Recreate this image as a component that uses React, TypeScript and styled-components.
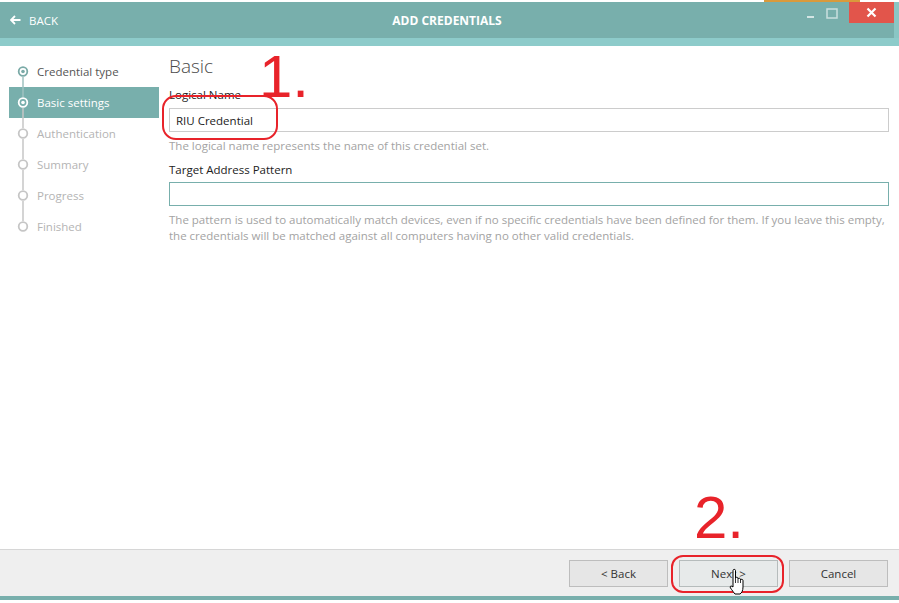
import React from "react";
import styled, { createGlobalStyle } from "styled-components";

const GlobalStyle = createGlobalStyle`
  html, body {
    margin: 0;
    padding: 0;
    background: #ffffff;
  }
  body {
    font-family: "Open Sans", "Noto Sans", sans-serif;
  }
`;

const Window = styled.div`
  position: relative;
  width: 899px;
  height: 603px;
  display: flex;
  flex-direction: column;
  overflow: hidden;
  background: #ffffff;
`;

const TopStrip = styled.div`
  height: 2px;
  background: linear-gradient(
    to right,
    #ffffff 0,
    #ffffff 764px,
    #d99a3c 764px,
    #d99a3c 860px,
    #ffffff 860px
  );
`;

const TitleBar = styled.div`
  position: relative;
  height: 36px;
  background: #78afac;
  display: flex;
  align-items: center;
  color: #ffffff;
  border-right: 5px solid #8ac6c4;
`;

const BackLink = styled.div`
  display: flex;
  align-items: center;
  gap: 8px;
  padding-left: 10px;
  font-size: 11.5px;
`;

const Title = styled.div`
  position: absolute;
  left: 0;
  right: 0;
  text-align: center;
  font-size: 12px;
  font-weight: 700;
  pointer-events: none;
`;

const WindowControls = styled.div`
  margin-left: auto;
  display: flex;
  align-self: flex-start;
  height: 21px;
`;

const ControlButton = styled.div<{ $close?: boolean; $w?: number }>`
  width: ${(p) => (p.$close ? 45 : p.$w ?? 22)}px;
  height: 21px;
  display: flex;
  align-items: center;
  justify-content: center;
  background: ${(p) => (p.$close ? "#e2554b" : "transparent")};
`;

const AccentBand = styled.div`
  height: 8px;
  background: #8dcbca;
`;

const Body = styled.div`
  flex: 1;
  display: flex;
`;

const Sidebar = styled.div`
  width: 150px;
  margin-left: 9px;
  padding-top: 10px;
  display: flex;
  flex-direction: column;
`;

const Step = styled.div<{ $active?: boolean; $done?: boolean }>`
  height: 31px;
  display: flex;
  align-items: center;
  gap: 7px;
  padding-left: 7px;
  font-size: 11.5px;
  background: ${(p) => (p.$active ? "#78afac" : "transparent")};
  color: ${(p) => (p.$active ? "#ffffff" : p.$done ? "#555555" : "#b4b4b4")};
`;

const Content = styled.div`
  flex: 1;
  padding: 7px 10px 0 10px;
`;

const Heading = styled.div`
  font-size: 19px;
  font-weight: 300;
  color: #4a4a4a;
  line-height: 26px;
  height: 28px;
`;

const Label = styled.div<{ $gap?: number }>`
  font-size: 11.5px;
  color: #222222;
  line-height: 16px;
  margin-top: ${(p) => p.$gap ?? 0}px;
`;

const Input = styled.div<{ $focus?: boolean; $gap?: number }>`
  height: 22px;
  margin-top: ${(p) => p.$gap ?? 5}px;
  border: 1px solid ${(p) => (p.$focus ? "#78afac" : "#cccccc")};
  display: flex;
  align-items: center;
  padding-left: 6px;
  font-size: 11.5px;
  color: #222222;
`;

const Hint = styled.div`
  margin-top: 6px;
  font-size: 11.5px;
  line-height: 16px;
  color: #a3a3a3;
`;

const Footer = styled.div`
  height: 47px;
  box-sizing: border-box;
  border-top: 1px solid #d6d6d6;
  background: #efefef;
  display: flex;
  justify-content: flex-end;
  align-items: flex-start;
  gap: 11px;
  padding: 10px 11px 0 0;
`;

const Button = styled.div<{ $hover?: boolean }>`
  width: 99px;
  height: 27px;
  box-sizing: border-box;
  border: 1px solid ${(p) => (p.$hover ? "#b6bcbc" : "#bdbdbd")};
  background: ${(p) => (p.$hover ? "#e7eaea" : "#e6e6e6")};
  display: flex;
  align-items: center;
  justify-content: center;
  font-size: 11.5px;
  color: #333333;
`;

const BottomBar = styled.div`
  height: 4px;
  background: #78afac;
`;

const BottomGap = styled.div`
  height: 3px;
  background: #ffffff;
`;

const Annotation = styled.div<{ $x: number; $y: number }>`
  position: absolute;
  left: ${(p) => p.$x}px;
  top: ${(p) => p.$y}px;
  font-family: "Liberation Sans", Arial, sans-serif;
  font-size: 60px;
  line-height: 60px;
  color: #e8232a;
  pointer-events: none;
`;

const Ring = styled.div<{ $x: number; $y: number; $w: number; $h: number; $r: number }>`
  position: absolute;
  left: ${(p) => p.$x}px;
  top: ${(p) => p.$y}px;
  width: ${(p) => p.$w}px;
  height: ${(p) => p.$h}px;
  border: 2px solid #e8232a;
  border-radius: ${(p) => p.$r}px;
  box-sizing: border-box;
  pointer-events: none;
`;

const Cursor = styled.svg`
  position: absolute;
  left: 729px;
  top: 568px;
`;

type StepState = "done" | "active" | "pending";

const steps: { name: string; state: StepState }[] = [
  { name: "Credential type", state: "done" },
  { name: "Basic settings", state: "active" },
  { name: "Authentication", state: "pending" },
  { name: "Summary", state: "pending" },
  { name: "Progress", state: "pending" },
  { name: "Finished", state: "pending" },
];

function StepMarker({ index, state }: { index: number; state: StepState }) {
  const last = index === steps.length - 1;
  const first = index === 0;
  const circle =
    state === "active" ? "#ffffff" : state === "done" ? "#7aaaa7" : "#c6c6c6";
  const upLine = index <= 1 ? "#9fc2c0" : "#c6c6c6";
  const downLine = index === 0 ? "#9fc2c0" : "#c6c6c6";
  return (
    <svg width="14" height="31" viewBox="0 0 14 31">
      {!first && <line x1="7" y1="0" x2="7" y2="10" stroke={upLine} strokeWidth="1.5" />}
      {!last && <line x1="7" y1="21" x2="7" y2="31" stroke={downLine} strokeWidth="1.5" />}
      <circle cx="7" cy="15.5" r="4.3" fill="none" stroke={circle} strokeWidth="1.8" />
      {state !== "pending" && <circle cx="7" cy="15.5" r="1.8" fill={circle} />}
    </svg>
  );
}

export default function App() {
  return (
    <>
      <GlobalStyle />
      <Window>
        <TopStrip />
        <TitleBar>
          <BackLink>
            <svg width="11" height="10" viewBox="0 0 11 10">
              <path d="M5 1 L1 5 L5 9 M1 5 H10.5" fill="none" stroke="#ffffff" strokeWidth="1.8" />
            </svg>
            BACK
          </BackLink>
          <Title>ADD CREDENTIALS</Title>
          <WindowControls>
            <ControlButton>
              <svg width="10" height="10" viewBox="0 0 10 10">
                <rect x="2" y="8" width="7" height="2" fill="#d3e5e4" />
              </svg>
            </ControlButton>
            <ControlButton>
              <svg width="12" height="12" viewBox="0 0 12 12">
                <rect x="1" y="2" width="10" height="9" fill="none" stroke="#c9dfde" strokeWidth="1.5" />
              </svg>
            </ControlButton>
            <ControlButton $w={6} />
            <ControlButton $close>
              <svg width="11" height="11" viewBox="0 0 11 11">
                <path d="M1.5 1.5 L9.5 9.5 M9.5 1.5 L1.5 9.5" stroke="#ffffff" strokeWidth="2.2" />
              </svg>
            </ControlButton>
          </WindowControls>
        </TitleBar>
        <AccentBand />
        <Body>
          <Sidebar>
            {steps.map((s, i) => (
              <Step key={s.name} $active={s.state === "active"} $done={s.state === "done"}>
                <StepMarker index={i} state={s.state} />
                {s.name}
              </Step>
            ))}
          </Sidebar>
          <Content>
            <Heading>Basic</Heading>
            <Label $gap={6}>Logical Name</Label>
            <Input>RIU Credential</Input>
            <Hint>The logical name represents the name of this credential set.</Hint>
            <Label $gap={8}>Target Address Pattern</Label>
            <Input $focus $gap={4} />
            <Hint>
              The pattern is used to automatically match devices, even if no specific credentials
              have been defined for them. If you leave this empty,
              <br />
              the credentials will be matched against all computers having no other valid
              credentials.
            </Hint>
          </Content>
        </Body>
        <Footer>
          <Button>&lt; Back</Button>
          <Button $hover>Next &gt;</Button>
          <Button>Cancel</Button>
        </Footer>
        <BottomBar />
        <BottomGap />

        <Annotation $x={259} $y={47}>1.</Annotation>
        <Ring $x={162} $y={95} $w={116} $h={45} $r={14} />
        <Annotation $x={694} $y={488}>2.</Annotation>
        <Ring $x={671} $y={555} $w={113} $h={38} $r={12} />
        <Cursor width="18" height="32" viewBox="0 0 18 32">
          <path
            d="M4 2.5 C4 1 6.5 1 6.5 2.5 V10 C6.5 9 9 9 9 10.2 V11 C9 10 11.5 10 11.5 11.3 V12 C11.5 11 14 11 14 12.5 V19 C14 23 12.5 25 11 26 H6 C5 25 3 22 1.5 20 C0.6 18.8 1.6 17.4 3 18.3 L4 19 Z"
            fill="#ffffff"
            stroke="#000000"
            strokeWidth="1"
            strokeLinejoin="round"
          />
          <path d="M6.5 10 V15 M9 11 V15 M11.5 12 V15" stroke="#000000" strokeWidth="0.8" />
        </Cursor>
      </Window>
    </>
  );
}
